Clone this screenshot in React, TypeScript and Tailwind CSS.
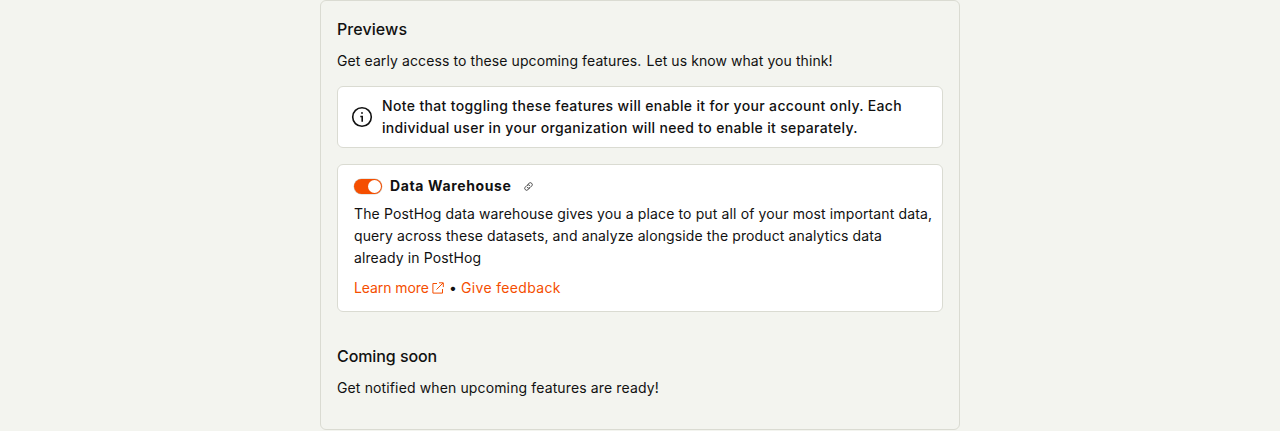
export default function App() {
  return (
    <div className="flex h-[431px] justify-center bg-[#f3f4ef] font-['Inter',sans-serif] text-[14px] leading-[22px] text-[#111111]">
      <main className="h-[430px] w-[640px] rounded-md border border-[#dadbd2] px-4 pt-4">
        <h3 className="text-base leading-6 font-medium tracking-[0.08px]">Previews</h3>
        <p className="mt-[9px] tracking-[0.096px]">Get early access to these upcoming features. <span className="ml-px tracking-[0.07px]">Let us know what you think!</span></p>
        <div className="mt-[14px] flex h-[62px] items-center rounded-md border border-[#dadbd2] bg-white pl-3 font-medium">
          <svg className="size-6 shrink-0" viewBox="0 0 24 24" fill="none" stroke="currentColor" strokeWidth="1.6">
            <circle cx="12" cy="12" r="9.3" />
            <path d="M10.3 11.5H12.2V16.7" />
            <circle cx="12" cy="8" r="0.9" fill="currentColor" stroke="none" />
          </svg>
          <div className="ml-2 whitespace-nowrap">
            <span className="block tracking-[0.353px]">Note that toggling these features will enable it for your account only. Each</span>
            <span className="block tracking-[0.33px]">individual user in your organization will need to enable it separately.</span>
          </div>
        </div>
        <section className="mt-4 h-[148px] rounded-md border border-[#dadbd2] bg-white pt-[10px] pl-4">
          <div className="flex items-center">
            <button aria-label="Data Warehouse" className="mt-px flex h-[15px] w-7 items-center justify-end rounded-full bg-[#f54e00] pr-px shadow-[0_0_0_0.5px_#d0d1c9]">
              <span className="size-[13px] rounded-full bg-white" />
            </button>
            <h4 className="ml-2 font-bold tracking-[0.64px]">Data Warehouse</h4>
            <svg className="ml-3 size-[9px] text-[#333333]" viewBox="0 0 24 24" fill="none" stroke="currentColor" strokeWidth="2.4" strokeLinecap="round">
              <path d="m10 7 4-4a5 5 0 0 1 7 7l-5 5a5 5 0 0 1-7 0" />
              <path d="m14 17-4 4a5 5 0 0 1-7-7l5-5a5 5 0 0 1 7 0" />
            </svg>
          </div>
          <p className="mt-[6px] whitespace-nowrap">
            <span className="block tracking-[0.127px]">The PostHog data warehouse gives you a place to put all of your most important data,</span>
            <span className="block tracking-[0.12px]">query across these datasets, and analyze alongside the product analytics data</span>
            <span className="block tracking-[0.11px]">already in PostHog</span>
          </p>
          <div className="mt-2 flex items-center">
            <a href="#" className="flex w-[91px] items-center tracking-[-0.08px] text-[#f54e00]">
              Learn more
              <svg className="ml-[3px] size-3" viewBox="0 0 12 12" fill="none" stroke="currentColor" strokeWidth="1">
                <path d="M5 1.5H.9v9.6h9.6V7M7 .8h4.3v4.3M11 1 4.5 7.5" />
              </svg>
            </a>
            <span className="ml-1 w-3">•</span>
            <a href="#" className="tracking-[0.34px] text-[#f54e00]">Give feedback</a>
          </div>
        </section>
        <h3 className="mt-8 text-base leading-6 font-medium tracking-[-0.08px]">Coming soon</h3>
        <p className="mt-[9px] tracking-[0.13px]">Get notified when upcoming features are ready!</p>
      </main>
    </div>
  );
}
